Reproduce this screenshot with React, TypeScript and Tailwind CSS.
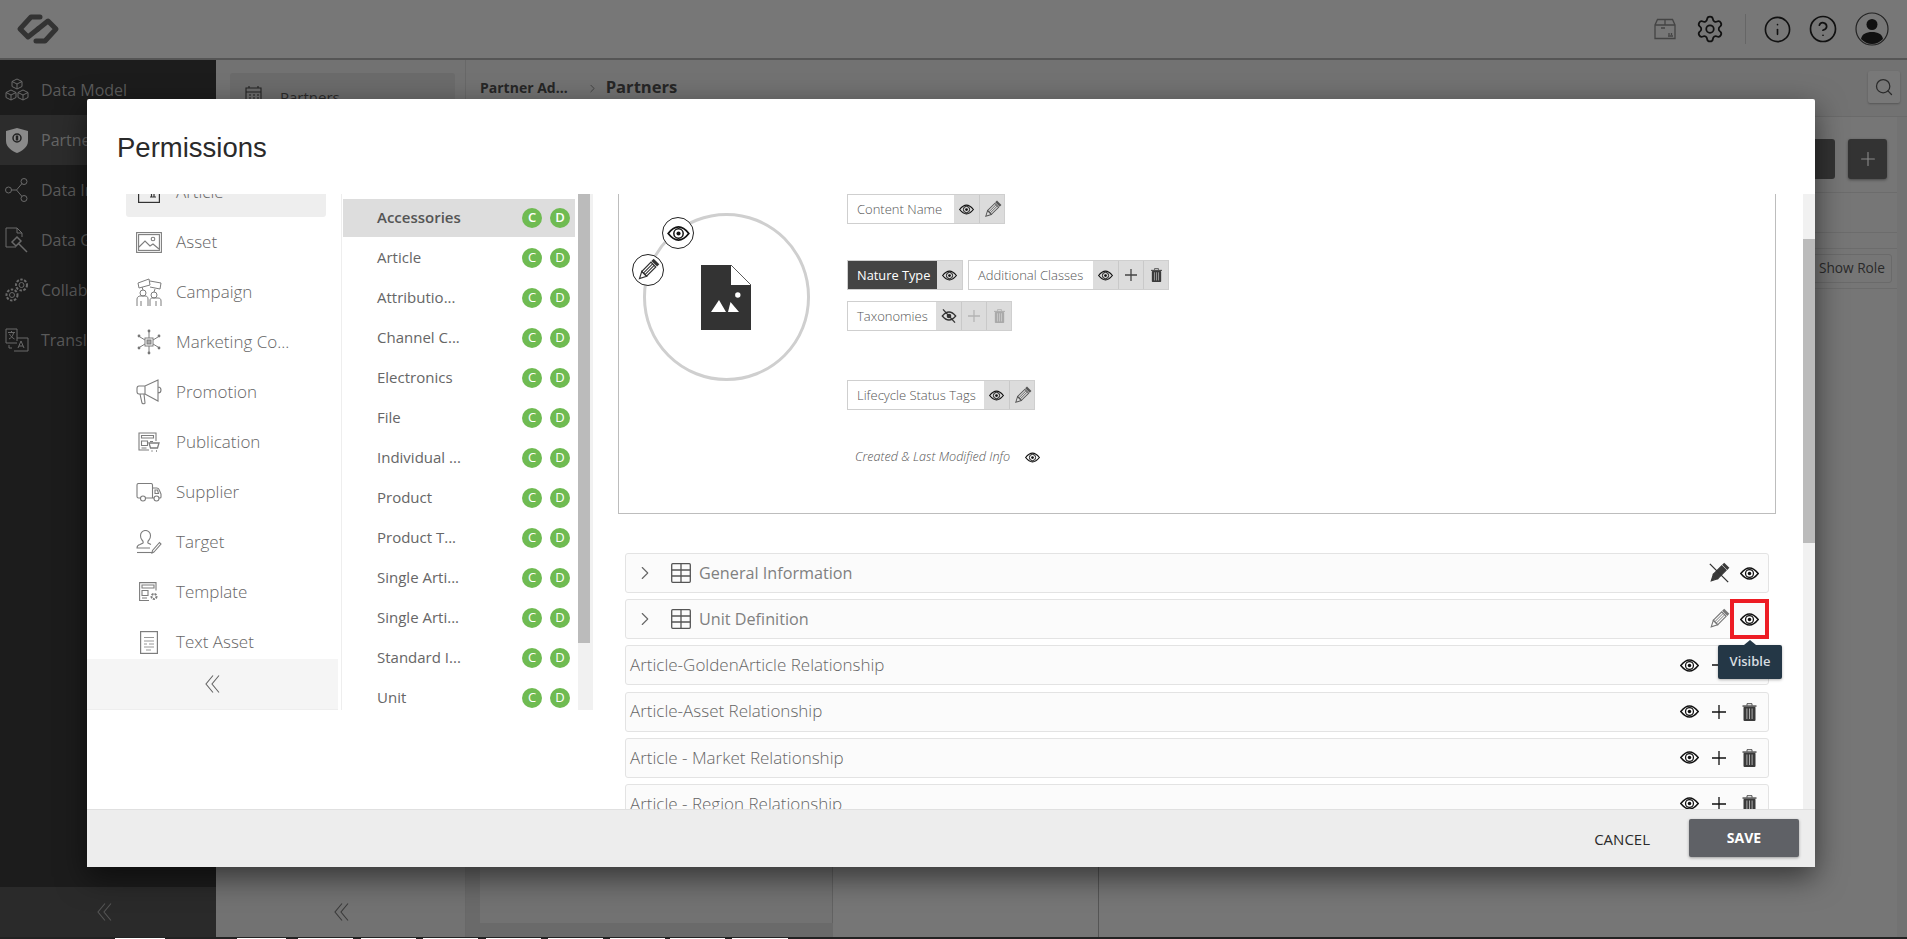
import React from "react";
import { ChevronRight, Info, CircleHelp, Settings, Search, Plus as PlusIcon } from "lucide-react";

const Eye = ({ w = 19, h = 13, c = "#111" }: { w?: number; h?: number; c?: string }) => (
  <svg width={w} height={h} viewBox="0 0 24 16" fill="none">
    <path d="M1 8C5 3 9 1 12 1s7 2 11 7c-4 5-8 7-11 7S5 13 1 8Z" stroke={c} strokeWidth="1.9" />
    <circle cx="12" cy="8" r="5" stroke={c} strokeWidth="1.6" />
    <circle cx="12" cy="8" r="2.2" fill={c} />
  </svg>
);
const EyeOff = ({ w = 16, h = 16 }: { w?: number; h?: number }) => (
  <svg width={w} height={h} viewBox="0 0 24 24" fill="none">
    <path d="M2 12C6 7 9 6 12 6s6 1 10 6c-4 5-7 6-10 6s-6-1-10-6Z" stroke="#333" strokeWidth="2" />
    <circle cx="12" cy="12" r="3.5" fill="#333" />
    <path d="M3 2l18 20" stroke="#333" strokeWidth="2" />
  </svg>
);
const Pencil = ({ s = 20, c = "#555", slash = false }: { s?: number; c?: string; slash?: boolean }) => (
  <svg width={s} height={s} viewBox="0 0 24 24" fill="none">
    <g transform="rotate(45 12 12)">
      <rect x="8" y="0" width="8" height="3.2" fill={c} />
      <rect x="8.6" y="4.4" width="6.8" height="13" fill={slash ? c : "none"} stroke={c} strokeWidth="1.2" />
      <path d="M10.9 4.4v13M13.1 4.4v13" stroke={c} strokeWidth="1" />
      <path d="M8.6 17.4 12 24l3.4-6.6Z" fill={slash ? c : "none"} stroke={c} strokeWidth="1.2" />
    </g>
    {slash && <path d="M2 2l20 20" stroke="#333" strokeWidth="1.4" />}
  </svg>
);
const Trash = ({ w = 15, h = 18, c = "#3a3a3a" }: { w?: number; h?: number; c?: string }) => (
  <svg width={w} height={h} viewBox="0 0 14 18" fill="none">
    <path d="M4.5 2.5V.7h5v1.8" stroke={c} strokeWidth=".9" />
    <rect x="0" y="2.4" width="14" height="1.3" fill={c} />
    <rect x="1" y="3.7" width="12" height="14.3" rx="1" fill={c} />
    <path d="M4.4 5.5V16M7 5.5V16M9.6 5.5V16" stroke="#ddd" strokeWidth=".7" />
  </svg>
);
const Cross = ({ s = 14, c = "#111", sw = 1.3 }: { s?: number; c?: string; sw?: number }) => (
  <svg width={s} height={s} viewBox="0 0 14 14" fill="none">
    <path d="M7 0v14M0 7h14" stroke={c} strokeWidth={sw} />
  </svg>
);
const DoubleChevron = ({ c = "#666", w = 15, h = 18 }: { c?: string; w?: number; h?: number }) => (
  <svg width={w} height={h} viewBox="0 0 15 18" fill="none" stroke={c} strokeWidth="1.1">
    <path d="M8 0.5 1 9l7 8.5M14 0.5 7 9l7 8.5" />
  </svg>
);
const Logo = () => (
  <svg width="44" height="30" viewBox="0 0 44 30" fill="none" stroke="#333" strokeWidth="5" strokeLinejoin="round" strokeLinecap="round">
    <path d="M24 3h-9L4 15l8 8 10-8" />
    <path d="M20 27h9l11-12-8-8-10 8" />
  </svg>
);

const S = { fill: "none", stroke: "#7d7d7d", strokeWidth: 1 };
const ArticleIcon = () => (
  <svg width="22" height="22" viewBox="0 0 22 22" {...S} stroke="#333" strokeWidth={1.2}>
    <rect x=".6" y=".6" width="20.8" height="20.8" />
    <path d="M12 16h6M13.5 13v3M16 13v3" />
  </svg>
);
const AssetIcon = () => (
  <svg width="26" height="21" viewBox="0 0 26 21" {...S} strokeWidth={1.1}>
    <rect x=".6" y=".6" width="24.8" height="19.8" />
    <rect x="2.6" y="2.6" width="20.8" height="15.8" />
    <path d="M3 15l6-6 5 5 3-2 6 5" />
    <circle cx="17" cy="7" r="1.8" />
  </svg>
);
const CampaignIcon = () => (
  <svg width="26" height="28" viewBox="0 0 26 28" {...S}>
    <path d="M2 5l11-4 1 6-11 3ZM14 3l11 2-1 6-10-2" />
    <circle cx="7" cy="15" r="3" />
    <circle cx="18" cy="17" r="3" />
    <path d="M1 28v-7c0-2 2-3 3-3h5c2 0 3 1 3 3v7M14 28v-6c0-1 1-2 2-2h6c2 0 3 1 3 3v5M5 28v-5M20 28v-5M7 12l-1-3M18 14l1-3" />
  </svg>
);
const MarketingIcon = () => (
  <svg width="24" height="26" viewBox="0 0 24 26" {...S}>
    <rect x="8" y="9" width="8" height="8" />
    <rect x="10" y="11" width="4" height="4" fill="#aaa" />
    <path d="M12 9V3M12 17v6M8 11 3 8M16 11l5-3M8 15l-5 3M16 15l5 3" />
    <g fill="#777" stroke="none"><circle cx="12" cy="2" r="1.4" /><circle cx="12" cy="24" r="1.4" /><circle cx="2" cy="7" r="1.4" /><circle cx="22" cy="7" r="1.4" /><circle cx="2" cy="19" r="1.4" /><circle cx="22" cy="19" r="1.4" /></g>
  </svg>
);
const PromotionIcon = () => (
  <svg width="26" height="26" viewBox="0 0 26 26" {...S}>
    <path d="M22 1 9 7H3C1.500 7 1 8 1 9.500v3C1 14 1.500 15 3 15h6l13 7ZM9 7v8M22 8c2 0 3 1.500 3 3s-1 3-3 3M4 15l2 9c1 1 3 1 3 0l-1-9" strokeWidth="1.1" />
  </svg>
);
const PublicationIcon = () => (
  <svg width="22" height="20" viewBox="0 0 22 20" {...S} strokeWidth={1.1}>
    <path d="M11 18H1V1h17v8" />
    <path d="M3.500 3.500h12v2.500h-12ZM3.500 9h6v4.500h-6ZM3.500 16h5M12 9.500h3" />
    <path d="M11 11h10l-1.500 5H12.500ZM13.500 19h1M18 19h1" strokeWidth={1.3} />
  </svg>
);
const SupplierIcon = () => (
  <svg width="26" height="19" viewBox="0 0 26 19" {...S} strokeWidth={1.1}>
    <path d="M5 15H2.500C1.500 15 1 14.500 1 13.500V2c0-1 .5-1.500 1.500-1.500H15c1 0 1.500.5 1.500 1.500v13H9M16.500 5H21c1.500 0 2 1 2.500 2.500L25 11v3c0 .5-.5 1-1 1h-1M18 15h-1.500M19 7h2.500l1 3.500H19Z" />
    <circle cx="7" cy="15.500" r="2.500" /><circle cx="20.500" cy="15.500" r="2.500" />
  </svg>
);
const TargetIcon = () => (
  <svg width="26" height="24" viewBox="0 0 26 24" {...S} strokeWidth={1.1}>
    <path d="M14 18H1c0-2 1-3 3-3.500l3-1.500c.5-1 0-2-1-3C5 9 4.500 7 4.500 5.500 4.500 2.500 7 .5 9.500.5s5 2 5 5c0 1.500-.5 3.500-1.500 4.500-1 1-1.500 2-1 3l3 1.500" />
    <path d="M1 22.500h15" />
    <path d="m18 22 7-8-1.500-1.500-7 8-.5 2.500Z" />
  </svg>
);
const TemplateIcon = () => (
  <svg width="20" height="20" viewBox="0 0 20 20" {...S} strokeWidth={1.1}>
    <path d="M10 18.500H.6V.6H17v8" />
    <path d="M3 3h12v3H3ZM3 8.500h6v5H3ZM3 16h5" />
    <circle cx="15" cy="14.500" r="2.500" strokeWidth={2} strokeDasharray="2 1" />
  </svg>
);
const TextAssetIcon = () => (
  <svg width="18" height="23" viewBox="0 0 18 23" {...S} strokeWidth={1.2}>
    <rect x=".6" y=".6" width="16.800" height="21.800" />
    <path d="M4 6.500h10M4 10h10M9 13h5M4 13h3M4 16h10M6 19h5" strokeWidth=".8" />
  </svg>
);

const leftItems: [string, React.ReactNode][] = [
  ["Article", <ArticleIcon />],
  ["Asset", <AssetIcon />],
  ["Campaign", <CampaignIcon />],
  ["Marketing Co...", <MarketingIcon />],
  ["Promotion", <PromotionIcon />],
  ["Publication", <PublicationIcon />],
  ["Supplier", <SupplierIcon />],
  ["Target", <TargetIcon />],
  ["Template", <TemplateIcon />],
  ["Text Asset", <TextAssetIcon />],
];
const midItems = ["Accessories", "Article", "Attributio...", "Channel C...", "Electronics", "File", "Individual ...", "Product", "Product T...", "Single Arti...", "Single Arti...", "Standard I...", "Unit"];

const SI = { fill: "none", stroke: "#6a6a6a", strokeWidth: 1 };
const navItems: [string, React.ReactNode, boolean][] = [
  ["Data Model", <svg width="24" height="24" viewBox="0 0 24 24" {...SI}><path d="m12 1 5 2.500v5L12 11 7 8.500v-5ZM7 3.500l5 2.500 5-2.500M12 6v5M6 12l5 2.500v5L6 22l-5-2.500v-5ZM1 14.500l5 2.500 5-2.500M6 17v5M18 12l5 2.500v5L18 22l-5-2.500v-5ZM13 14.500l5 2.500 5-2.500M18 17v5" /></svg>, false],
  ["Partner Administration", <svg width="24" height="26" viewBox="0 0 24 26"><path d="M12 1 23 4v10c0 6-6 10-11 12C7 24 1 20 1 14V4Z" fill="#8a8a8a" /><circle cx="12" cy="11" r="4" fill="none" stroke="#222" strokeWidth="1.500" /><path d="M12 8.500v5" stroke="#222" strokeWidth="2.500" /></svg>, true],
  ["Data Integration", <svg width="24" height="24" viewBox="0 0 24 24" {...SI}><circle cx="3.500" cy="12" r="3" /><circle cx="19" cy="3.500" r="3" /><circle cx="19" cy="20.500" r="3" /><path d="M6.500 12h5l5.500-6.500M11.500 12l5.500 6.500" /></svg>, false],
  ["Data Governance", <svg width="24" height="26" viewBox="0 0 24 26" {...SI}><path d="M11 20H1V1h11l5 5v4M12 1v5h5" /><path d="m7 15 5-5 4 4-5 5ZM14 17l8 8" strokeWidth="1.500" /></svg>, false],
  ["Collaboration", <svg width="24" height="24" viewBox="0 0 24 24" {...SI}><circle cx="16.500" cy="7" r="2.500" /><circle cx="16.500" cy="7" r="5.500" strokeDasharray="2.500 1.500" strokeWidth="2" /><circle cx="7" cy="17" r="2.500" /><circle cx="7" cy="17" r="5.500" strokeDasharray="2.500 1.500" strokeWidth="2" /></svg>, false],
  ["Translation", <svg width="24" height="24" viewBox="0 0 24 24" {...SI}><path d="M12 15H1V1h11v12M9 23h14V10H12" /><path d="M3 4.500h7M6.500 3v2M4 11c2-1 4-3 4.500-6M4.500 6c1 2 3 4 5 5" /><path d="m13 20 3-7 3 7M14 18h4" /><path d="M4 17v3h3" /></svg>, false],
];

const Cell = ({ children, first }: { children: React.ReactNode; first?: boolean }) => (
  <div className={`flex h-full w-[25px] items-center justify-center bg-[#dcdcdc] ${first ? "" : "border-l border-[#c9c9c9]"}`}>{children}</div>
);
const Chip = ({ label, labelW, dark, children }: { label: string; labelW: string; dark?: boolean; children: React.ReactNode }) => (
  <div className="flex h-[30px] w-fit border border-[#cfcfcf] bg-white">
    <div className={`flex h-full items-center pt-px pl-[9px] ${labelW} ${dark ? "bg-[#444444] text-[12.8px] font-medium text-white" : "text-[13px] font-light text-[#555555]"}`}>{label}</div>
    {children}
  </div>
);
const RowIcon = ({ children }: { children: React.ReactNode }) => <div className="flex w-[30px] items-center justify-center">{children}</div>;
const GridIcon = () => (
  <svg width="20" height="20" viewBox="0 0 20 20" fill="none" stroke="#555" strokeWidth="1.300"><rect x=".7" y=".7" width="18.600" height="18.600" rx="1" /><path d="M.7 7h18.600M.7 13h18.600M10 .7v18.600" /></svg>
);
const ExpandRow = ({ title, children }: { title: string; children: React.ReactNode }) => (
  <div className="relative flex h-10 items-center rounded-[3px] border border-[#e3e3e3] bg-[#fbfbfb] pr-[4px]">
    <ChevronRight size={22} strokeWidth={1.2} color="#666" className="ml-[8px]" />
    <div className="ml-[15px]"><GridIcon /></div>
    <div className="ml-[8px] flex-1 text-[16.2px] text-[#808080]">{title}</div>
    {children}
  </div>
);
const RelRow = ({ title }: { title: string }) => (
  <div className="flex h-10 flex-none items-center rounded-[3px] border border-[#e3e3e3] bg-[#fbfbfb] pr-[4px] pl-[4px]">
    <div className="flex-1 pb-px text-[17px] font-light text-[#666666]">{title}</div>
    <RowIcon><Eye /></RowIcon>
    <RowIcon><Cross /></RowIcon>
    <RowIcon><Trash /></RowIcon>
  </div>
);

const strip: [number, number][] = [[115, 50], [237, 49], [298, 55], [361, 55], [423, 55], [486, 55], [548, 55], [610, 55], [670, 55], [732, 56]];

export default function App() {
  return (
    <div className="relative flex h-[939px] w-[1907px] flex-col overflow-hidden bg-[#727272] font-['Open_Sans',sans-serif]">
      {/* page behind the dialog */}
      <header className="flex h-[60px] flex-none items-center border-b-2 border-[#555555] bg-[#777777] pl-[16px]">
        <Logo />
        <div className="ml-auto flex items-center">
          <svg width="22" height="22" viewBox="0 0 22 22" fill="none" stroke="#444" strokeWidth="1.300"><path d="M1 7V20.500H21V7L18.500 1.500H3.500ZM1 7h20M11 1.500V7M7 10h4M15 15v2M17.500 15v2M14 18h5" /></svg>
          <Settings size={30} strokeWidth={1.4} color="#111" className="ml-[19px]" />
          <div className="mr-[17px] ml-[20px] h-[30px] w-px bg-[#666666]" />
          <Info size={29} strokeWidth={1.35} color="#111" />
          <CircleHelp size={30} strokeWidth={1.35} color="#111" className="ml-[16px]" />
          <svg className="mr-[18px] ml-[17px]" width="34" height="34" viewBox="0 0 34 34" fill="none"><circle cx="17" cy="17" r="16" stroke="#222" strokeWidth="1.200" /><circle cx="17" cy="12.500" r="5.500" fill="#111" /><path d="M6 27c1-5 5-7 11-7s10 2 11 7c-3 3-7 5-11 5s-8-2-11-5Z" fill="#111" /></svg>
        </div>
      </header>
      <div className="flex h-[877px] flex-none">
        <aside className="flex w-[216px] flex-none flex-col bg-[#1c1c1c]">
          <div className="flex-1 pt-[5px]">
            {navItems.map(([t, ic, active]) => (
              <div key={t} className={`flex h-[50px] items-center overflow-hidden pl-[5px] whitespace-nowrap ${active ? "bg-[#2c2c2c] text-[#666666]" : "text-[#5a5a5a]"}`}>
                <div className="flex w-[24px] justify-center">{ic}</div>
                <span className="ml-[12px] text-[16px]">{t}</span>
              </div>
            ))}
          </div>
          <div className="flex h-[50px] items-center justify-center bg-[#2a2a2a] pr-[8px]"><DoubleChevron c="#555" /></div>
        </aside>
        <div className="flex w-[250px] flex-none flex-col border-r border-[#686868] bg-[#727272]">
          <div className="flex-1 pt-[13px] pr-[10px] pl-[14px]">
            <div className="flex h-[60px] rounded-[3px] bg-[#6b6b6b] pt-[13px] pl-[14px]">
              <svg width="22" height="24" viewBox="0 0 22 24" fill="none" stroke="#222" strokeWidth="1.100"><path d="M2 22V2h15v20ZM5 2V0M14 2V0M2 6h15M5 9h2M9 9h2M13 9h2M5 12h2M9 12h2M13 12h2" /></svg>
              <span className="ml-[14px] text-[15px] text-[#2a2a2a]">Partners</span>
            </div>
          </div>
          <div className="flex h-[50px] items-center justify-center pl-[2px]"><DoubleChevron c="#3a3a3a" /></div>
        </div>
        <main className="flex min-w-0 flex-1 flex-col">
          <div className="flex h-[57px] flex-none items-center border-b border-[#6a6a6a] pl-[14px]">
            <span className="mb-[1px] text-[14px] font-bold text-[#262626]">Partner Ad...</span>
            <ChevronRight size={13} strokeWidth={1.4} color="#333" className="mr-[7px] ml-[18px]" />
            <span className="mb-[1px] text-[16.6px] font-bold text-[#262626]">Partners</span>
            <div className="mr-[7px] mb-[2px] ml-auto flex h-[32px] w-[32px] items-center justify-center rounded-[2px] bg-[#787878] shadow-[0_1px_2px_rgba(0,0,0,0.25)]"><Search size={20} strokeWidth={1.5} color="#2a2a2a" /></div>
          </div>
          <div className="mr-[10px] flex min-h-0 flex-1 flex-col bg-[#767676]">
            <div className="flex h-[76px] flex-none justify-end gap-[13px] border-b border-[#6c6c6c] pt-[22px] pr-[10px]">
              <div className="h-[40px] w-[39px] rounded-[3px] bg-[#333333]" />
              <div className="flex h-[40px] w-[39px] items-center justify-center rounded-[3px] bg-[#333333] shadow-[0_1px_3px_rgba(0,0,0,0.4)]"><PlusIcon size={22} strokeWidth={1.2} color="#8a8a8a" /></div>
            </div>
            <div className="h-[40px] flex-none border-b border-[#6c6c6c]" />
            <div className="mt-[15px] flex h-[41px] flex-none items-center justify-end border-y border-[#6c6c6c] pr-[5px]">
              <div className="flex h-[29px] items-center rounded-[3px] border border-[#6a6a6a] px-[6px] text-[13.7px] text-[#2a2a2a]">Show Role</div>
            </div>
            <div className="flex min-h-0 flex-1">
              <div className="w-[367px] flex-none bg-[#6a6a6a] pb-[14px] pl-[14px]"><div className="h-full border-r border-[#626262] bg-[#727272]" /></div>
              <div className="w-[266px] flex-none border-r border-[#555555]" />
              <div className="flex-1" />
            </div>
          </div>
        </main>
      </div>
      <div className="relative h-[2px] flex-none bg-[#222222]">
        {strip.map(([x, w]) => (
          <div key={x} className="absolute bottom-0 h-[1px] bg-white" style={{ left: x, width: w }} />
        ))}
      </div>

      {/* dialog */}
      <div className="absolute top-[99px] left-[87px] flex h-[768px] w-[1728px] flex-col rounded-[2px] bg-white shadow-[0_10px_30px_rgba(0,0,0,0.55)]">
        <div className="h-[95px] flex-none pt-[30px] pl-[30px] font-['Liberation_Sans',sans-serif] text-[27.5px] leading-[38px] text-[#2a2a2a]">Permissions</div>
        <div className="flex h-[615px] flex-none">
          {/* class list */}
          <div className="flex h-[516px] w-[251px] flex-none flex-col">
            <div className="min-h-0 flex-1 overflow-hidden">
              <div className="-mt-[27px] pr-[12px] pl-[39px]">
                {leftItems.map(([t, ic], i) => (
                  <div key={t} className={`flex h-[50px] items-center whitespace-nowrap rounded-[3px] ${i === 0 ? "bg-[#eeeeee]" : ""}`}>
                    <div className="ml-[10px] flex w-[26px] justify-center">{ic}</div>
                    <span className="ml-[14px] text-[17px] font-light text-[#666666]">{t}</span>
                  </div>
                ))}
              </div>
            </div>
            <div className="flex h-[51px] flex-none items-center justify-center border-b border-[#eeeeee] bg-[#f5f5f5]"><DoubleChevron /></div>
          </div>
          <div className="ml-[3px] h-[516px] w-px flex-none bg-[#eeeeee]" />
          {/* type list */}
          <div className="flex h-[516px] w-[251px] flex-none">
            <div className="ml-px h-full w-[232px] flex-none overflow-hidden pt-[5px]">
              {midItems.map((t, i) => (
                <div key={i} className={`flex items-center pr-[5px] pl-[34px] text-[15px] ${i === 0 ? "mb-[1px] h-[38px] bg-[#dddddd] font-semibold text-[#555555]" : "h-[40px] text-[#666666]"}`}>
                  <span className="flex-1 pb-[2px]">{t}</span>
                  <span className="flex h-5 w-5 items-center justify-center rounded-full bg-[#6fbb52] text-[13px] text-white">C</span>
                  <span className="ml-2 flex h-5 w-5 items-center justify-center rounded-full bg-[#6fbb52] text-[13px] text-white">D</span>
                </div>
              ))}
            </div>
            <div className="ml-[3px] h-full w-[15px] flex-none bg-[#f1f1f1]"><div className="h-[449px] w-[12px] bg-[#bbbbbb]" /></div>
          </div>
          {/* form */}
          <div className="flex min-w-0 flex-1">
            <div className="min-w-0 flex-1 overflow-hidden pl-[25px]">
              <div className="flex h-[320px] w-[1158px] border-x border-b border-[#bdbdbd] pl-[24px]">
                <div className="relative mt-[19px] flex h-[168px] w-[167px] flex-none items-center justify-center rounded-full border-[3px] border-[#cfcfcf]">
                  <svg className="-ml-[2px]" width="50" height="65" viewBox="0 0 50 65"><path d="M0 0h30v20h20v45H0Z" fill="#333" /><path d="M30 0l20 20" stroke="#333" strokeWidth=".8" /><path d="M10 47l8-12 7 12ZM27 47l2.500-10 8.500 10Z" fill="#fff" /><circle cx="36.800" cy="30" r="2.700" fill="#fff" /></svg>
                  <div className="absolute top-[1px] left-[16px] flex h-8 w-8 items-center justify-center rounded-full border border-[#222222] bg-white"><Eye w={23} h={15} /></div>
                  <div className="absolute top-[38px] left-[-14px] flex h-8 w-8 items-center justify-center rounded-full border border-[#222222] bg-white"><Pencil s={24} c="#333" /></div>
                </div>
                <div className="ml-[37px] flex flex-col">
                  <Chip label="Content Name" labelW="w-[106px]"><Cell first><Eye w={15} h={11} /></Cell><Cell><Pencil s={19} /></Cell></Chip>
                  <div className="mt-[36px] flex gap-[5px]">
                    <Chip label="Nature Type" labelW="w-[89px]" dark><Cell first><Eye w={15} h={11} /></Cell></Chip>
                    <Chip label="Additional Classes" labelW="w-[124px]"><Cell first><Eye w={15} h={11} /></Cell><Cell><Cross s={12} c="#444" sw={1.5} /></Cell><Cell><Trash w={11} h={14} /></Cell></Chip>
                  </div>
                  <div className="mt-[11px]">
                    <Chip label="Taxonomies" labelW="w-[88px]"><Cell first><EyeOff /></Cell><Cell><Cross s={12} c="#b4b4b4" sw={1.5} /></Cell><Cell><Trash w={11} h={14} c="#aaaaaa" /></Cell></Chip>
                  </div>
                  <div className="mt-[49px]">
                    <Chip label="Lifecycle Status Tags" labelW="w-[136px]"><Cell first><Eye w={15} h={11} /></Cell><Cell><Pencil s={19} /></Cell></Chip>
                  </div>
                  <div className="mt-[37px] flex h-5 items-center pl-[8px]">
                    <span className="text-[12.6px] font-light text-[#555555] italic">Created &amp; Last Modified Info</span>
                    <span className="ml-[15px]"><Eye w={15} h={11} /></span>
                  </div>
                </div>
              </div>
              <div className="mt-[39px] ml-[7px] flex w-[1144px] flex-col gap-[6.2px]">
                <ExpandRow title="General Information">
                  <RowIcon><Pencil s={22} c="#3a3a3a" slash /></RowIcon>
                  <RowIcon><Eye /></RowIcon>
                </ExpandRow>
                <ExpandRow title="Unit Definition">
                  <RowIcon><Pencil s={22} c="#777777" /></RowIcon>
                  <RowIcon><Eye /></RowIcon>
                  <div className="absolute -top-px right-[-1px] -bottom-px w-[39px] border-4 border-[#ed1c24]" />
                  <div className="absolute top-[45px] right-[-14px] z-10 flex h-[34px] w-[64px] items-center justify-center rounded-[2px] bg-[#243746] text-[13px] font-semibold text-[#d8dde0] shadow-[0_1px_3px_rgba(0,0,0,0.3)] before:absolute before:top-[-5px] before:left-[26px] before:h-0 before:w-0 before:border-x-[6px] before:border-b-[5px] before:border-x-transparent before:border-b-[#243746] before:content-['']">Visible</div>
                </ExpandRow>
                <RelRow title="Article-GoldenArticle Relationship" />
                <RelRow title="Article-Asset Relationship" />
                <RelRow title="Article - Market Relationship" />
                <RelRow title="Article - Region Relationship" />
              </div>
            </div>
            <div className="h-full w-[12px] flex-none bg-[#f1f1f1]"><div className="mt-[45px] h-[304px] bg-[#bbbbbb]" /></div>
          </div>
        </div>
        <div className="flex h-[58px] flex-none items-start justify-end border-t border-[#e0e0e0] bg-[#ededed] pt-[9px] pr-[16px]">
          <span className="mt-[9px] mr-[39px] text-[15px] font-normal text-[#2a2a2a]">CANCEL</span>
          <div className="flex h-[38px] w-[110px] items-center justify-center rounded-[2px] bg-[#5f6166] pb-px text-[14px] font-bold text-white shadow-[0_1px_3px_rgba(0,0,0,0.35)]">SAVE</div>
        </div>
      </div>
    </div>
  );
}
